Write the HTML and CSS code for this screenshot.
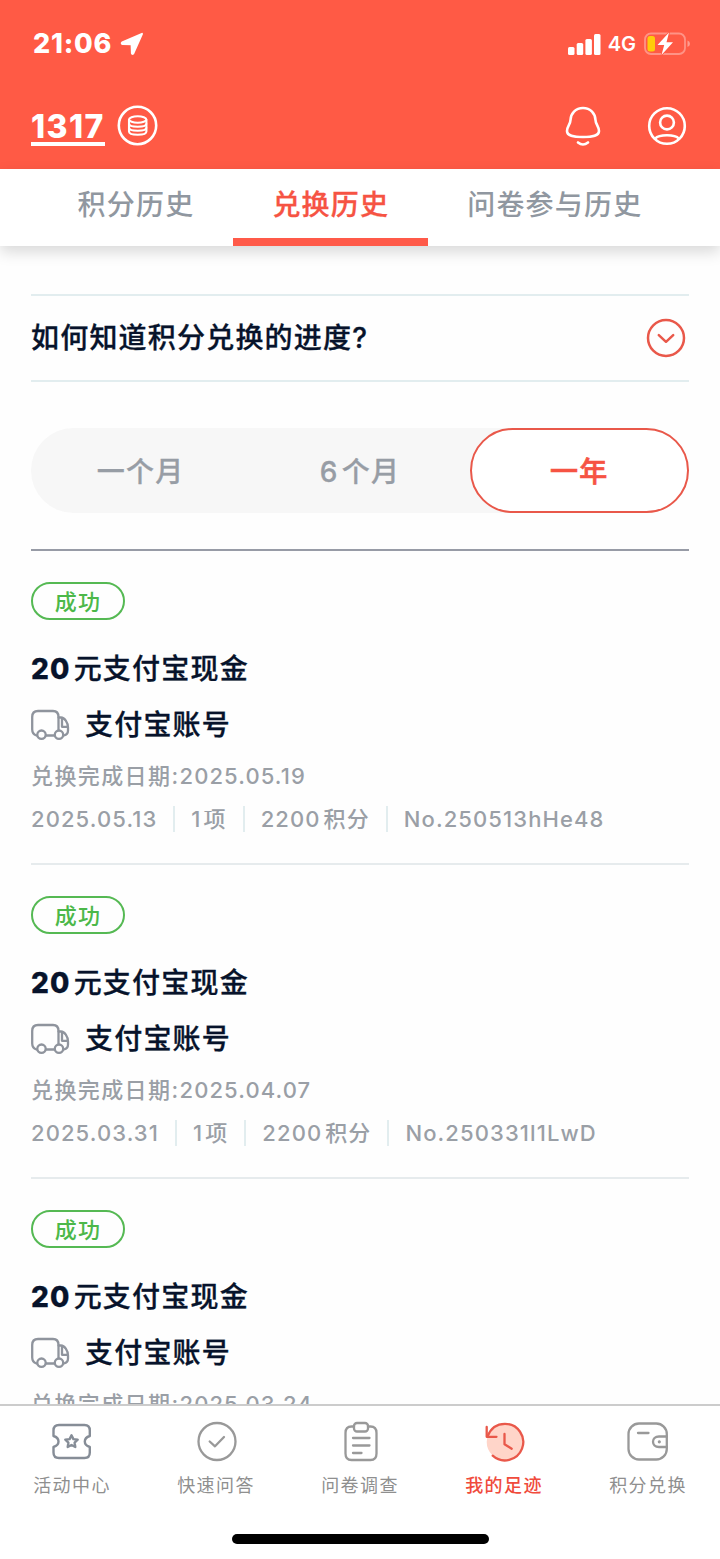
FILE: index.html
```html
<!doctype html>
<html lang="zh-CN">
  <head>
    <meta charset="UTF-8" />
    <meta name="viewport" content="width=device-width, initial-scale=1.0" />
    <title>兑换历史</title>
    <link rel="stylesheet" href="styles.css">
  </head>
  <body>
    <header class="header">
      <div class="status-bar">
        <div class="status-left">
          <span class="time">21:06</span>
          <svg width="24" height="24" viewBox="0 0 24 24">
            <path d="M22 1.800 L13.200 21.600 Q12.300 22.400 11.900 21.200 L11.600 12.300 L2.400 12 Q1.200 11.400 2.200 10.500 Z" fill="#fff" stroke="#fff" stroke-width="2" stroke-linejoin="round" />
          </svg>
        </div>
        <div class="status-right">
          <svg width="33" height="21" viewBox="0 0 33 21" fill="#fff">
            <rect x="0" y="13" width="6.500" height="8" rx="1.500" />
            <rect x="8.700" y="9" width="6.500" height="12" rx="1.500" />
            <rect x="17.400" y="5" width="6.500" height="16" rx="1.500" />
            <rect x="26" y="0" width="6.500" height="21" rx="1.500" />
          </svg>
          <span class="network">4G</span>
          <svg width="47" height="24" viewBox="0 0 47 24">
            <rect x="1" y="1.500" width="40" height="20.500" rx="6" fill="none" stroke="#fff" stroke-opacity="0.35" stroke-width="1.800" />
            <path d="M43.500 8.500 Q46 9.500 46 11.700 Q46 14 43.500 15 Z" fill="#fff" fill-opacity="0.4" />
            <rect x="3.500" y="4" width="7.500" height="15.500" rx="2.500" fill="#ffcc0a" />
            <path d="M25 0.500 L13.500 13 H20.200 L17.500 23 L29 10.300 H22.500 Z" fill="#fff" stroke="#ff5a45" stroke-width="1.600" paint-order="stroke" stroke-linejoin="round" />
          </svg>
        </div>
      </div>
      <div class="account-bar">
        <a class="points">1317</a>
        <svg class="coin" width="42" height="42" viewBox="0 0 42 42" fill="none" stroke="#fff" stroke-width="2.100">
          <circle cx="20.500" cy="20.500" r="18.700" stroke-width="2.600" />
          <ellipse cx="20.700" cy="14.500" rx="8.700" ry="3.200" />
          <path d="M12 14.500 V26.500 C12 30.800 29.400 30.800 29.400 26.500 V14.500" />
          <path d="M12 18.500 C12 22.800 29.400 22.800 29.400 18.500" />
          <path d="M12 22.500 C12 26.800 29.400 26.800 29.400 22.500" />
        </svg>
        <svg class="bell" width="36" height="42" viewBox="0 0 36 42" fill="none" stroke="#fff" stroke-width="2.600" stroke-linecap="round">
          <path d="M18 3 C10.500 3 5.700 8.500 5.500 15 C5.400 19.500 2 21.500 2 26 C2 31 8 32 18 32 C28 32 34 31 34 26 C34 21.500 30.600 19.500 30.500 15 C30.300 8.500 25.500 3 18 3 Z" />
          <path d="M13 37.500 Q18 41.500 23 37.500" />
        </svg>
        <svg class="user" width="40" height="40" viewBox="0 0 40 40" fill="none" stroke="#fff" stroke-width="2.600">
          <circle cx="20" cy="20" r="17.800" />
          <circle cx="20" cy="16.500" r="6.900" />
          <path d="M8.300 32.500 C12 28.200 28 28.200 31.700 32.500" />
        </svg>
      </div>
    </header>

    <nav class="tabs">
      <a class="tab">积分历史</a>
      <a class="tab active">兑换历史</a>
      <a class="tab">问卷参与历史</a>
    </nav>

    <main class="content">
      <div class="faq">
        <span>如何知道积分兑换的进度?</span>
        <svg width="40" height="40" viewBox="0 0 40 40" fill="none" stroke="#e9584a" stroke-width="2.500" stroke-linecap="round" stroke-linejoin="round">
          <circle cx="20" cy="20" r="18" />
          <path d="M12.800 17.200 L20 23.800 L27.200 17.200" />
        </svg>
      </div>

      <div class="period">
        <button class="period-btn">一个月</button>
        <button class="period-btn"><span class="num">6</span>个月</button>
        <button class="period-btn active">一年</button>
      </div>

      <section class="records">
        <article class="record">
          <span class="badge">成功</span>
          <h2 class="title"><span class="num">20</span>元支付宝现金</h2>
          <div class="account">
            <svg class="truck" width="40" height="32" viewBox="0 0 40 32">
              <use href="#truck" />
            </svg>
            <span>支付宝账号</span>
          </div>
          <p class="done">兑换完成日期:<span class="date">2025.05.19</span></p>
          <ul class="meta">
            <li>2025.05.13</li>
            <li><span class="count">1</span>项</li>
            <li><span class="num">2200</span>积分</li>
            <li>No.250513hHe48</li>
          </ul>
        </article>

        <article class="record">
          <span class="badge">成功</span>
          <h2 class="title"><span class="num">20</span>元支付宝现金</h2>
          <div class="account">
            <svg class="truck" width="40" height="32" viewBox="0 0 40 32">
              <use href="#truck" />
            </svg>
            <span>支付宝账号</span>
          </div>
          <p class="done">兑换完成日期:<span class="date">2025.04.07</span></p>
          <ul class="meta">
            <li>2025.03.31</li>
            <li><span class="count">1</span>项</li>
            <li><span class="num">2200</span>积分</li>
            <li>No.250331l1LwD</li>
          </ul>
        </article>

        <article class="record">
          <span class="badge">成功</span>
          <h2 class="title"><span class="num">20</span>元支付宝现金</h2>
          <div class="account">
            <svg class="truck" width="40" height="32" viewBox="0 0 40 32">
              <use href="#truck" />
            </svg>
            <span>支付宝账号</span>
          </div>
          <p class="done">兑换完成日期:<span class="date">2025.03.24</span></p>
        </article>
      </section>
    </main>

    <footer class="bottom">
      <nav class="bottom-nav">
        <a class="nav-item">
          <svg width="42" height="42" viewBox="0 0 42 42" fill="none" stroke="#868d97" stroke-width="2.400" stroke-linejoin="round">
            <path d="M8 4 H33.500 Q38.800 4 38.800 9.500 V15 Q33.800 16.500 33.800 20.500 Q33.800 24.500 38.800 26 V31.500 Q38.800 37 33.500 37 H8 Q2.500 37 2.500 31.500 V26 Q7.500 24.500 7.500 20.500 Q7.500 16.500 2.500 15 V9.500 Q2.500 4 8 4 Z" />
            <path d="M20.500 14.300 L22.400 18.100 L26.700 18.700 L23.600 21.700 L24.300 26 L20.500 24 L16.700 26 L17.400 21.700 L14.300 18.700 L18.600 18.100 Z" />
          </svg>
          <span>活动中心</span>
        </a>
        <a class="nav-item">
          <svg width="42" height="42" viewBox="0 0 42 42" fill="none" stroke="#999" stroke-width="2.300" stroke-linecap="round" stroke-linejoin="round">
            <circle cx="22" cy="20.500" r="18.500" />
            <path d="M14.700 20.500 L20 25.300 L29 16" />
          </svg>
          <span>快速问答</span>
        </a>
        <a class="nav-item">
          <svg width="42" height="42" viewBox="0 0 42 42" fill="none" stroke="#999" stroke-width="2.300" stroke-linecap="round" stroke-linejoin="round">
            <path d="M15 5.500 H12.500 Q6.500 5.500 6.500 12 V32.500 Q6.500 39 12.500 39 H31.500 Q37.500 39 37.500 32.500 V12 Q37.500 5.500 31.500 5.500 H29" />
            <rect x="15" y="2" width="14" height="8.500" rx="3" />
            <path d="M14 17 H30.500 M14 24.500 H30.500 M14 32 H22.500" />
          </svg>
          <span>问卷调查</span>
        </a>
        <a class="nav-item active">
          <svg width="42" height="42" viewBox="0 0 42 42" fill="none" stroke="#e9584a" stroke-width="2.300" stroke-linecap="round" stroke-linejoin="round">
            <circle cx="22" cy="21" r="18.300" fill="#ffd5c9" stroke="none" />
            <path d="M4.500 15.500 C7.500 7.500 14 2.800 22 2.800 A18.300 18.300 0 1 1 9.700 34.700" />
            <path d="M3.700 6 V15.800 H13.500" />
            <path d="M21.500 13 V23.200 L28.700 27.700" />
          </svg>
          <span>我的足迹</span>
        </a>
        <a class="nav-item">
          <svg width="42" height="42" viewBox="0 0 42 42" fill="none" stroke="#999" stroke-width="2.300" stroke-linecap="round" stroke-linejoin="round">
            <rect x="1.500" y="2.500" width="38.300" height="36" rx="10.500" />
            <path d="M11 12 H21.500" />
            <path d="M39.800 15.500 H32 C24 15.500 24 26 32 26 H39.800" />
            <circle cx="32.300" cy="20.800" r="1" fill="#999" stroke-width="1.200" />
          </svg>
          <span>积分兑换</span>
        </a>
      </nav>
      <div class="home-indicator"></div>
    </footer>

    <svg class="sprite">
      <symbol id="truck" viewBox="0 0 40 32">
        <g fill="none" stroke="#8f949d" stroke-width="2.300" stroke-linecap="round" stroke-linejoin="round">
          <path d="M5.500 26.500 Q1.200 25 1.200 20.500 V8 Q1.200 2 7 2 H22 Q27.500 2 27.500 8 V21" />
          <path d="M15 26.500 H23" />
          <path d="M27.500 8.500 H30 C33.500 8.500 37 13.500 37 18.500 V21.500 Q37 25.500 33 26.500 M36.500 17.800 H31 V9" />
          <circle cx="10.500" cy="25.700" r="4.200" />
          <circle cx="28" cy="25.700" r="4.200" />
        </g>
      </symbol>
    </svg>
  </body>
</html>
```
FILE: styles.css
```css
* {
  box-sizing: border-box;
}

body {
  font-family: Inter, "Noto Sans CJK SC", sans-serif;
  margin: 0;
  height: 100vh;
  display: flex;
  flex-direction: column;
  overflow: hidden;
  background-color: #fefefe;
  color: #07132b;
  letter-spacing: 1.2px;
}

svg {
  display: block;
  flex-shrink: 0;
}

.sprite {
  position: absolute;
  width: 0;
  height: 0;
}

.header {
  flex: none;
  height: 169px;
  background-color: #ff5a45;
  color: #fff;
}

.status-bar {
  height: 88px;
  padding: 0 29px 0 33px;
  display: flex;
  justify-content: space-between;
  align-items: center;
}

.status-left,
.status-right {
  display: flex;
  align-items: center;
}

.time {
  font-size: 27px;
  font-weight: 800;
  line-height: 28px;
  letter-spacing: 0.8px;
  margin-right: 8px;
}

.network {
  font-size: 20px;
  font-weight: 600;
  letter-spacing: 0;
  margin: 0 8px 0 7px;
}

.account-bar {
  height: 76px;
  padding: 0 33px 0 31px;
  display: flex;
  align-items: center;
}

.points {
  font-size: 32px;
  font-weight: 800;
  line-height: 30px;
  letter-spacing: 1.4px;
  padding-top: 8px;
  border-bottom: 4px solid #fff;
  margin: -2px 12px 0 0;
}

.bell {
  margin-left: auto;
  margin-right: 46px;
}

.user {
  margin-top: -1px;
}

.tabs {
  flex: none;
  height: 77px;
  display: flex;
  justify-content: center;
  background-color: #fff;
  box-shadow: 0 6px 14px rgba(0, 0, 0, 0.15);
}

.tab {
  height: 77px;
  padding: 1px 39px 0;
  font-size: 28px;
  line-height: 70px;
  font-weight: 500;
  color: #9097a0;
  border-bottom: 8px solid transparent;
}

.tab.active {
  color: #f65343;
  border-bottom-color: #ff5a49;
  -webkit-text-stroke: 0.3px;
}

.content {
  flex: 1;
  min-height: 0;
  overflow: hidden;
  padding: 48px 31px 0;
}

.faq {
  height: 88px;
  display: flex;
  align-items: center;
  justify-content: space-between;
  padding-right: 3px;
  border-top: 2px solid #e2edef;
  border-bottom: 2px solid #e2edef;
  font-size: 28px;
  line-height: 42px;
  font-weight: 500;
  -webkit-text-stroke: 0.3px;
}

.period {
  height: 85px;
  margin: 46px 0 36px;
  display: flex;
  border-radius: 43px;
  background-color: #f7f7f7;
}

.period-btn {
  width: 33.333%;
  padding: 0 0 2px;
  border: none;
  border-radius: 43px;
  background: none;
  font-family: inherit;
  font-size: 28px;
  font-weight: 500;
  letter-spacing: 1.2px;
  color: #979da5;
  -webkit-text-stroke: 0.3px;
}

.period-btn.active {
  border: 2px solid #e9584a;
  background-color: #fff;
  color: #f65343;
  -webkit-text-stroke: 0.7px;
}

.num {
  margin-right: 3px;
}

.records {
  border-top: 2px solid #979ba6;
}

.record {
  height: 314px;
  padding-top: 31px;
  border-bottom: 2px solid #e6ebed;
}

.badge {
  display: block;
  width: 94px;
  height: 38px;
  border: 2px solid #55b953;
  border-radius: 19px;
  font-size: 22px;
  line-height: 36px;
  font-weight: 500;
  text-align: center;
  color: #4cb849;
}

.title {
  margin: 28px 0 0;
  font-size: 28px;
  line-height: 42px;
  font-weight: 500;
  -webkit-text-stroke: 0.3px;
}

.title .num {
  font-weight: 800;
}

.account {
  display: flex;
  align-items: center;
  height: 42px;
  margin-top: 14px;
  font-size: 28px;
  line-height: 40px;
  font-weight: 500;
  -webkit-text-stroke: 0.3px;
}

.account span {
  margin-bottom: 1px;
}

.truck {
  margin-right: 14px;
}

.done {
  margin: 13px 0 0;
  font-size: 22px;
  line-height: 34px;
  letter-spacing: 1.4px;
  font-weight: 500;
  color: #9a9fa6;
}

.date {
  letter-spacing: 1.1px;
}

.meta {
  display: flex;
  align-items: center;
  list-style: none;
  margin: 13px 0 0;
  padding: 0;
  font-size: 22px;
  line-height: 26px;
  letter-spacing: 1.1px;
  font-weight: 500;
  color: #9a9fa6;
}

.meta li {
  height: 26px;
  padding: 0 16px;
  border-right: 2px solid #e2edef;
}

.meta .count {
  margin-right: 2px;
}

.meta li:first-child {
  padding-left: 0;
}

.meta li:last-child {
  border-right: none;
}

.bottom {
  flex: none;
  height: 155px;
  border-top: 2px solid #ccc;
  background-color: #fff;
}

.bottom-nav {
  display: flex;
  height: 128px;
  padding-top: 15px;
}

.nav-item {
  width: 144px;
  display: flex;
  flex-direction: column;
  align-items: center;
  font-size: 18px;
  line-height: 26px;
  letter-spacing: 1.4px;
  color: #8f8f8f;
}

.nav-item span {
  margin-top: 10px;
}

.nav-item.active {
  color: #f04b3c;
  font-weight: 500;
}

.home-indicator {
  width: 257px;
  height: 10px;
  margin: 0 auto;
  border-radius: 5px;
  background-color: #000;
}
```
